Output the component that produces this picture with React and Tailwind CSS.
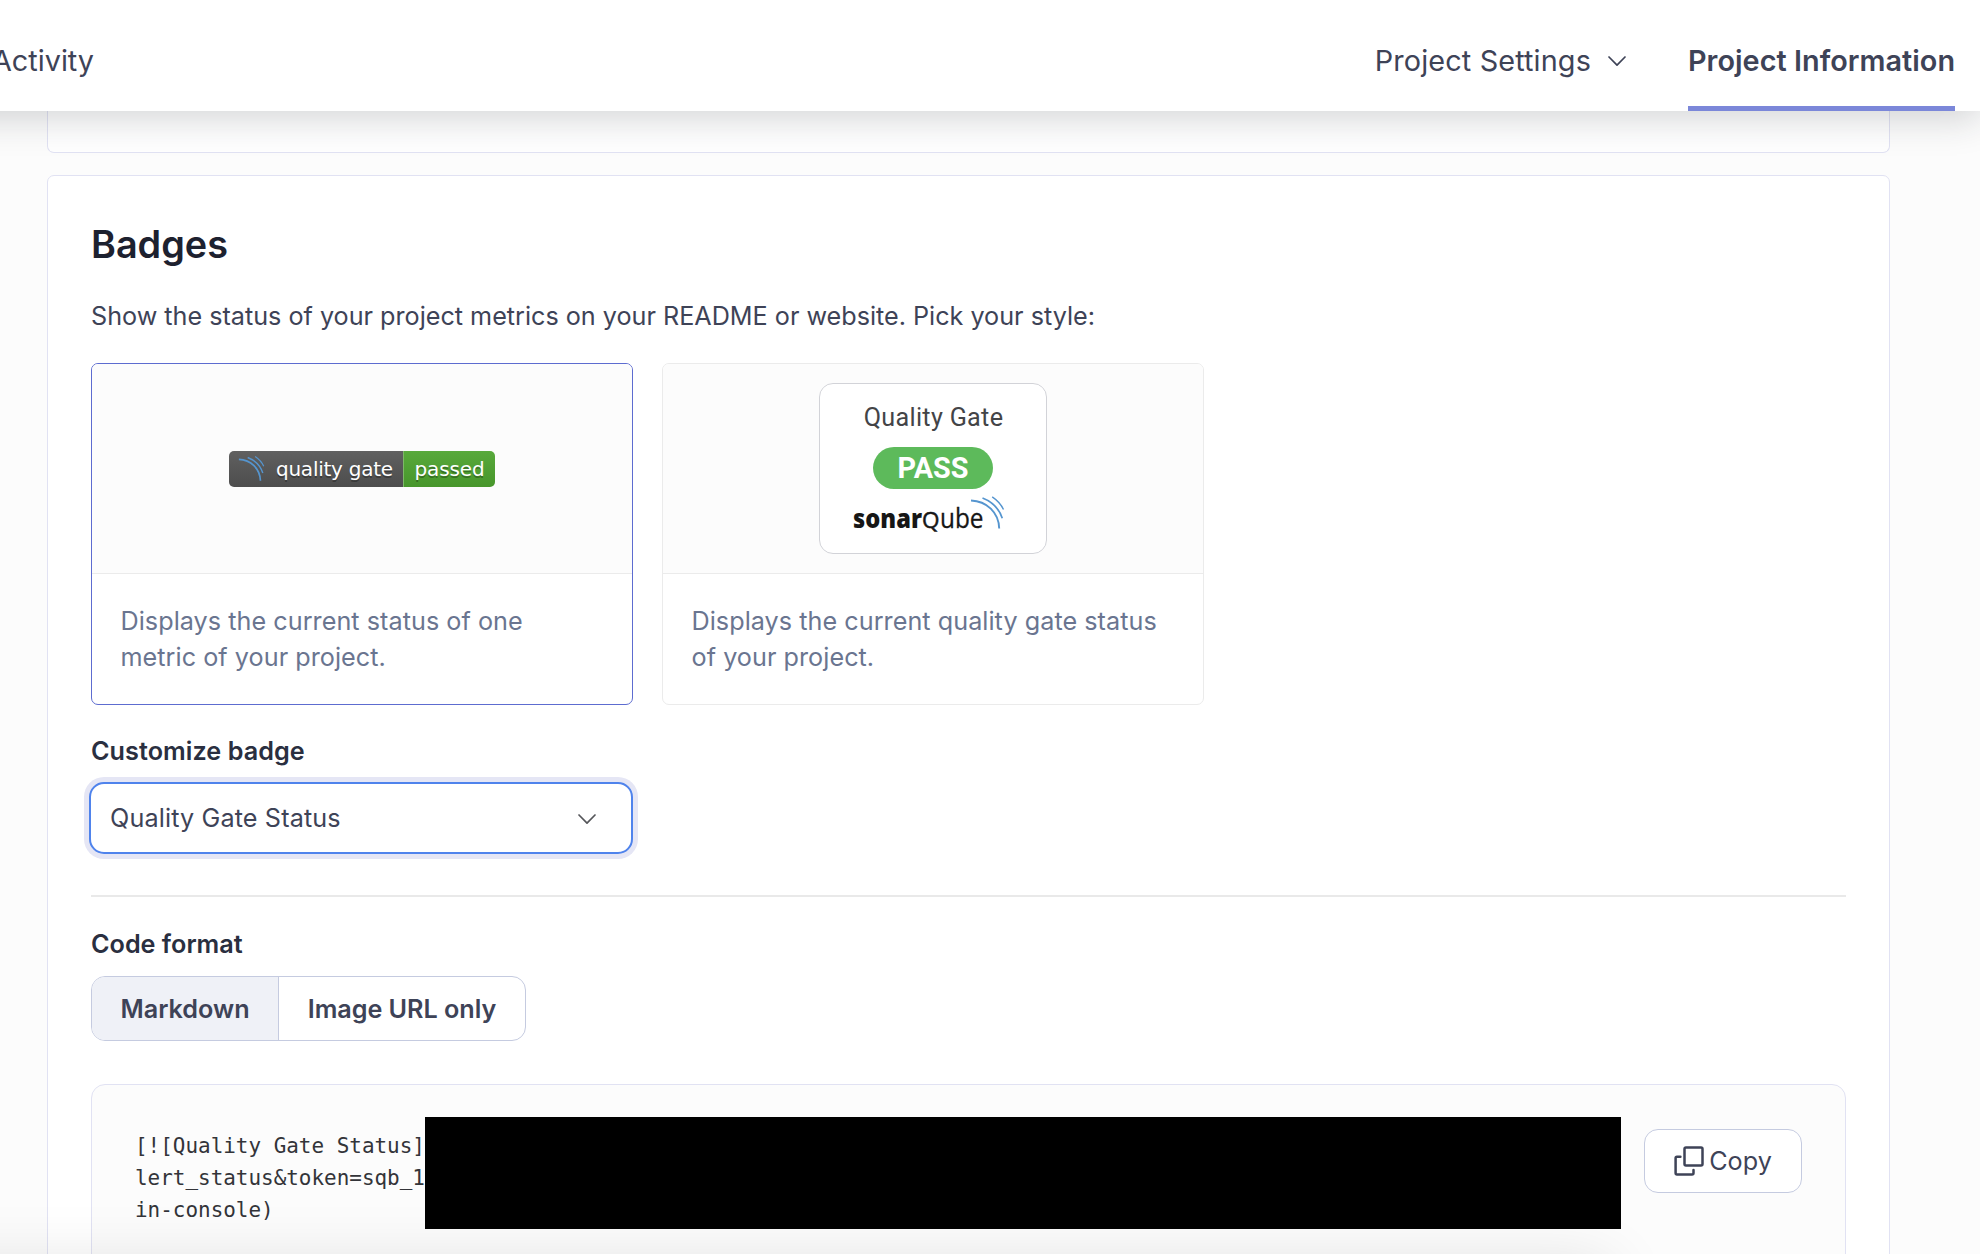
function Chevron({ className }) {
  return (
    <svg className={className} width="18" height="11" viewBox="0 0 18 11" fill="none" stroke="currentColor" strokeWidth="1.7" strokeLinecap="round" strokeLinejoin="round">
      <path d="M1 1 L9 9.2 L17 1" />
    </svg>
  );
}

function Waves({ className, width, height, stroke }) {
  return (
    <svg className={className} width={width} height={height} viewBox="0 0 34 34" fill="none" stroke={stroke}>
      <path d="M0.5 4.5 C16 5 28.3 16.500 28.700 32.500" strokeWidth="2.200" />
      <path d="M12 2 C21 5.500 28.500 12.500 31.800 22.200" strokeWidth="1.900" />
      <path d="M21.700 0.800 C26.500 4 30.500 8 33 13.500" strokeWidth="1.600" />
    </svg>
  );
}

function StatusBadge() {
  return (
    <div className="flex h-9 w-[266px] overflow-hidden rounded-[5px] text-[20px] leading-9 text-white font-['DejaVu_Sans',sans-serif] [text-shadow:0_2px_0_rgba(1,1,1,0.3)]">
      <div className="flex w-[174px] bg-linear-to-b from-[#606060] to-[#4d4d4d]">
        <Waves className="ml-[9px] mt-[5px] shrink-0" width="27" height="26" stroke="#5595cf" />
        <span className="ml-[11px] whitespace-nowrap tracking-[-0.25px]">quality gate</span>
      </div>
      <div className="flex flex-1 justify-center border-l border-[#7db868] bg-linear-to-b from-[#58a93b] to-[#47962b]">
        <span className="tracking-[-0.1px]">passed</span>
      </div>
    </div>
  );
}

function GateBadge() {
  return (
    <div className="flex h-[171px] w-[228px] flex-col items-center rounded-[14px] border border-[#d2d3d8] bg-white pt-[16px] font-[Roboto,sans-serif]">
      <div className="pl-px text-[25.2px] leading-[36px] tracking-[0.3px] text-[#434447]">Quality Gate</div>
      <div className="mt-[11px] flex h-[42px] w-[120px] items-center justify-center rounded-full bg-[#5dba5b] text-[28.8px] font-bold leading-none text-white">PASS</div>
      <svg className="-ml-[8px] mt-[7px]" width="152" height="46" viewBox="0 0 152 46">
        <text x="0" y="31.800" fontFamily="Open Sans" fontWeight="800" fontSize="26.500" fill="#161616" textLength="69" lengthAdjust="spacingAndGlyphs">sonar</text>
        <text x="69" y="31.800" fontFamily="Open Sans" fontWeight="400" fontSize="21.500" fill="#161616" stroke="#161616" strokeWidth="0.500" textLength="17.500" lengthAdjust="spacingAndGlyphs">Q</text>
        <text x="87" y="31.800" fontFamily="Open Sans" fontWeight="400" fontSize="26.500" fill="#161616" stroke="#161616" strokeWidth="0.300" textLength="43.500" lengthAdjust="spacingAndGlyphs">ube</text>
        <g transform="translate(117.500 0)" fill="none" stroke="#5595cf">
          <path d="M0.500 4.500 C16 5 28.300 16.500 28.700 32.500" strokeWidth="1.900" />
          <path d="M12 2 C21 5.500 28.500 12.500 31.800 22.200" strokeWidth="1.700" />
          <path d="M21.700 0.800 C26.500 4 30.500 8 33 13.500" strokeWidth="1.400" />
        </g>
      </svg>
    </div>
  );
}

function StyleCard({ selected, badge, lines }) {
  return (
    <div className={"flex h-[342px] w-[542px] flex-col overflow-hidden rounded-[7px] border bg-white " + (selected ? "border-[#5d6cd0]" : "border-[#ebebeb]")}>
      <div className="flex h-[210px] items-center justify-center border-b border-[#ebebeb] bg-[#fcfcfc]">{badge}</div>
      <div className="pl-[28.5px] pt-[29px] text-[25.2px] leading-9 tracking-[0.04px] text-[#6a7590]">
        {lines.map((l) => <div key={l} className="whitespace-nowrap">{l}</div>)}
      </div>
    </div>
  );
}

export default function App() {
  return (
    <div className="relative flex h-[1254px] w-[1980px] flex-col overflow-hidden bg-[#fcfcfc] font-[Inter,sans-serif] text-[25.2px] text-[#3e4357]">
      <header className="relative z-10 -ml-[60px] flex h-[111px] w-[2040px] shrink-0 bg-white text-[28.8px] leading-[36px] shadow-[0_7px_36px_rgba(29,33,47,0.2)]">
        <div className="ml-[52px] mt-[43px] whitespace-nowrap">Activity</div>
        <div className="ml-auto mt-[43px] flex items-start whitespace-nowrap tracking-[0.14px]">
          Project Settings
          <Chevron className="ml-[17px] mt-[13px]" />
        </div>
        <div className="ml-[62px] mr-[25px] flex w-[267px] flex-col border-b-[5px] border-[#7b87d9] pt-[43px] font-semibold whitespace-nowrap tracking-[0.04px]">Project Information</div>
      </header>

      <div className="ml-[47px] h-[42px] w-[1843px] shrink-0 rounded-b-[7px] border border-t-0 border-[#e1e2f3] bg-white" />

      <main className="ml-[47px] mt-[22px] flex h-[1200px] w-[1843px] shrink-0 flex-col rounded-[7px] border border-[#e1e2f3] bg-white px-[43px]">
        <h1 className="mt-[47px] text-[37.8px] font-semibold leading-[43px] text-[#1d212f]">Badges</h1>
        <p className="mt-[32px] leading-9 tracking-[-0.01px]">Show the status of your project metrics on your README or website. Pick your style:</p>
        <div className="mt-[29px] flex gap-[29px]">
          <StyleCard selected badge={<StatusBadge />} lines={["Displays the current status of one", "metric of your project."]} />
          <StyleCard badge={<GateBadge />} lines={["Displays the current quality gate status", "of your project."]} />
        </div>
        <div className="mt-[28px] font-semibold leading-9 tracking-[0.06px] text-[#2a2f40]">Customize badge</div>
        <div className="-ml-[2px] mt-[13px] flex h-[72px] w-[544px] items-center justify-between rounded-[15px] border-2 border-[#4f83ec] bg-white pl-[19px] pr-[35px] shadow-[0_0_0_5px_#e5e6f5]">
          <span className="mt-[2px] tracking-[0.13px]">Quality Gate Status</span>
          <Chevron className="mt-[2px] text-[#55565a]" />
        </div>
        <div className="mt-[41px] h-[2px] shrink-0 bg-[#e9e9e9]" />
        <div className="mt-[29px] font-semibold leading-9 text-[#2a2f40]">Code format</div>
        <div className="mt-[14px] flex h-[65px] w-[435px] shrink-0 overflow-hidden rounded-[14px] border border-[#c5cbe0] font-semibold">
          <div className="flex w-[187px] items-center justify-center border-r border-[#c5cbe0] bg-[#eff1f7] pt-[2px]">Markdown</div>
          <div className="flex flex-1 items-center justify-center pt-[2px] tracking-[-0.04px]">Image URL only</div>
        </div>
        <div className="mt-[43px] flex h-[260px] shrink-0 rounded-[14px] border border-[#e1e2f3] bg-[#fcfcfc]">
          <pre className="ml-[43px] mt-[45px] w-[290px] font-['DejaVu_Sans_Mono',monospace] text-[20.95px] leading-[32px] text-[#333439]">{"[![Quality Gate Status]\nlert_status&token=sqb_1\nin-console)"}</pre>
          <div className="mt-[32px] h-[112px] w-[1196px] shrink-0 bg-black" />
          <button className="ml-[23px] mt-[44px] flex h-[64px] w-[158px] items-center justify-center rounded-[14px] border border-[#c5cbe0] bg-white">
            <svg className="mr-[5px]" width="30" height="30" viewBox="0 0 30 30" fill="none" stroke="#3e4357" strokeWidth="2.500" strokeLinejoin="round" strokeLinecap="round">
              <rect x="10.500" y="1.500" width="18" height="18" rx="1.500" />
              <path d="M6.400 10.800 H3 Q1.600 10.800 1.600 12.200 V27 Q1.600 28.500 3 28.500 H18 Q19.500 28.500 19.500 27 V24" />
            </svg>
            <span className="pt-px">Copy</span>
          </button>
        </div>
      </main>

      <div className="absolute -bottom-[110px] -left-[100px] h-[100px] w-[1710px] shadow-[0_0_64px_rgba(0,0,0,0.12)]" />
    </div>
  );
}
